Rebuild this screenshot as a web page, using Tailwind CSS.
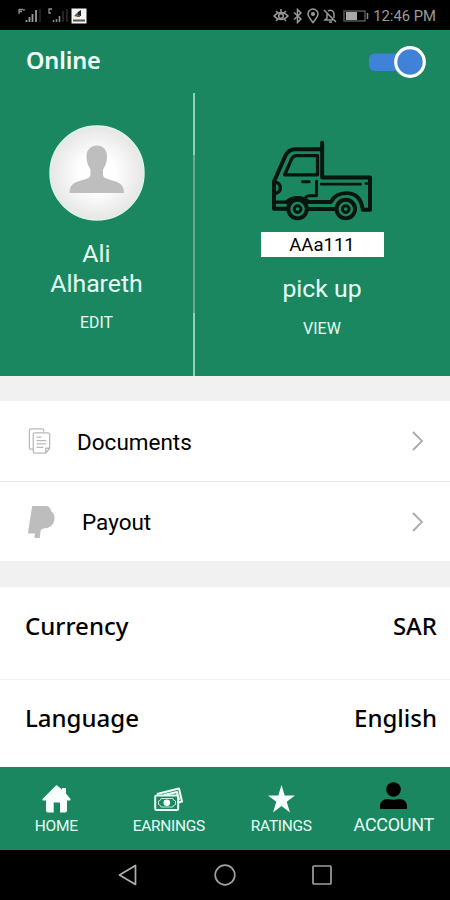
<!DOCTYPE html>
<html lang="en">
<head>
  <meta charset="UTF-8" />
  <meta name="viewport" content="width=device-width, initial-scale=1.0"/>
  <title>Driver | Account</title>
  <script src="https://cdn.jsdelivr.net/npm/@tailwindcss/browser@4"></script>
</head>
<body class="bg-white font-['Roboto',sans-serif] text-black">
  <div class="w-[450px] h-[900px] flex flex-col overflow-hidden">

    <!-- Status Bar -->
    <div class="h-[30px] shrink-0 bg-black flex items-center justify-between pl-[17px] pr-[14px] text-[#9a9a9a]">
      <svg class="w-[72px] h-[18px]" viewBox="0 0 72 18" fill="none">
        <path d="M2 3v5M2 3.500h4M2 5.500h3M7 3v2" stroke="#8f8f8f" stroke-width="1.300"/>
        <path d="M9.500 16v-2M12.500 16v-5M15.500 16V8M19 16V4" stroke="#9a9a9a" stroke-width="1.800"/>
        <path d="M23 16V3" stroke="#333" stroke-width="1.200"/>
        <path d="M35 3h-3v4h2" stroke="#8f8f8f" stroke-width="1.300"/>
        <path d="M36.500 16v-2M39.500 16v-3M42.500 16v-6" stroke="#8a8a8a" stroke-width="1.600"/>
        <path d="M46 16V5M50 16V3" stroke="#333" stroke-width="1.400"/>
        <path d="M54.500 2.500h15v15h-15z" fill="#f4f4f0"/>
        <path d="M57 10l4-4v5z" fill="#2d7a55"/>
        <path d="M61 6l3-2v6h-3z" fill="#222"/>
        <path d="M60 9h3v2h-3z" fill="#c33"/>
        <path d="M56 14.500h12" stroke="#555" stroke-width="2"/>
      </svg>
      <div class="flex items-center mt-[2px]">
        <svg class="w-[96px] h-[16px] mr-[4px]" viewBox="0 0 96 16" fill="none" stroke="#9a9a9a" stroke-width="1.500">
          <path d="M1 8q7-7 14 0q-7 7-14 0zM3 3l2 2M8 1v3M13 3l-2 2M3 13l2-2M13 13l-2-2"/>
          <circle cx="8" cy="8" r="2.300"/>
          <path d="M21 4.500l7 6.500-3.500 3.500V1.500L28 5l-7 6.500"/>
          <path d="M40 14.500c-3-4-5-6-5-8.500a5 5 0 0 1 10 0c0 2.500-2 4.500-5 8.500z"/>
          <circle cx="40" cy="6" r="1.300" fill="#9a9a9a"/>
          <path d="M51 2l12 12M54 5v5l-2 2h8M55 3c3-2 6 0 6 3v4M56 14h3"/>
          <path d="M71 3h21v10H71z" stroke="#555"/>
          <path d="M73 4h11v8H73z" fill="#a8a8a8" stroke="none"/>
          <path d="M94.500 5v6" stroke="#888"/>
        </svg>
        <span class="text-[14.800px] leading-none whitespace-nowrap">12:46 PM</span>
      </div>
    </div>

    <!-- Online Toggle -->
    <div class="h-[63px] shrink-0 bg-[#1b8761] flex items-center justify-between pl-[26px] pr-[24px]">
      <h1 class="-mt-[2px] text-[23.500px] leading-none font-semibold tracking-[-0.150px] text-[#f0fff8] font-['Noto_Sans',sans-serif]">Online</h1>
      <button class="w-[57px] h-[32px] flex items-center" aria-label="Online">
        <svg class="w-[57px] h-[32px]" viewBox="0 0 57 32">
          <rect x="0" y="7.500" width="40" height="17.500" rx="6" fill="#3f82d8"/>
          <circle cx="41" cy="16" r="14.300" fill="#3f82d8" stroke="#fff" stroke-width="3.200"/>
        </svg>
      </button>
    </div>

    <!-- Profile And Vehicle -->
    <div class="h-[283px] shrink-0 bg-[#1b8761] flex text-[#e6fff4]">
      <div class="w-[193px] flex flex-col items-center pt-[32px]">
        <svg class="w-[96px] h-[96px]" viewBox="0 0 96 96">
          <defs>
            <radialGradient id="avatarBg">
              <stop offset="0.400" stop-color="#fefefe"/>
              <stop offset="1" stop-color="#e6e6e6"/>
            </radialGradient>
          </defs>
          <circle cx="48" cy="48" r="47" fill="url(#avatarBg)" stroke="#dcf8ea" stroke-width="1.400"/>
          <path d="M48 20.500c6 0 10 4 10 11 0 6-2 10-4 13v5c0 4 5 4.500 11 6.500 7 2 10 5 10 12H20.500c0-7 3-10 10-12 6-2 11-2.500 11-6.500v-5c-2-3-4-7-4-13 0-7 4.500-11 10.500-11z" fill="#bebebe"/>
        </svg>
        <div class="mt-[18px] text-[24.800px] leading-[29.500px] text-center">Ali<br>Alhareth</div>
        <a href="#" class="mt-[16px] text-[15.800px] leading-[18px]">EDIT</a>
      </div>
      <div class="w-[3px] pr-px flex flex-col">
        <div class="h-[62px] bg-[#93cfb5]"></div>
        <div class="h-[158px] bg-[#6aa88f]"></div>
        <div class="grow bg-[#93cfb5]"></div>
      </div>
      <div class="grow flex flex-col items-center pt-[47px] pr-[2px]">
        <svg class="w-[103px] h-[81px]" viewBox="95 30 310 242" fill="none" stroke="#07150f" stroke-width="12" stroke-linejoin="round" stroke-linecap="round">
          <path d="M249 37v105H393v97h-22"/>
          <path d="M246 57h-78q-19 0-29 18l-35 79v82h42"/>
          <path d="M235 76h-63q-10 0-15 10l-21 48h99z" stroke-width="10"/>
          <path d="M103 155q20 2 20 18t-20 18M105 216h38" stroke-width="10"/>
          <path d="M190 155h20M232 153v44h-23q-5 0-10 5" stroke-width="9"/>
          <path d="M246 162h119M380 160h9" stroke-width="8"/>
          <path d="M143 216q10-12 32-12 22 0 33 12h67q14-27 46-27 42 0 49 44M209 237h76"/>
          <circle cx="175" cy="237" r="28"/>
          <circle cx="175" cy="237" r="10" stroke-width="9"/>
          <circle cx="320" cy="237" r="28"/>
          <circle cx="320" cy="237" r="10" stroke-width="9"/>
        </svg>
        <div class="mt-[11px] w-[123px] h-[25px] bg-white text-black text-[18.500px] leading-[26px] text-center">AAa111</div>
        <div class="mt-[17px] text-[24.800px] leading-[30px]">pick up</div>
        <a href="#" class="mt-[16px] text-[16px] leading-[18px]">VIEW</a>
      </div>
    </div>

    <div class="h-[25px] shrink-0 bg-[#f1f1f2]"></div>

    <!-- Menu Rows -->
    <a href="#" class="h-[81px] shrink-0 border-b border-[#e8e8e8] flex items-center pl-[28px] pr-[27px]">
      <svg class="w-[23px] h-[27px]" viewBox="0 0 23 28" fill="none" stroke="#b9b9b9" stroke-width="1.300" stroke-linejoin="round">
        <path d="M5 22H3q-2 0-2-2V3q0-2 2-2h11q2 0 2 2v1"/>
        <path d="M5 7q0-2 2-2h13q2 0 2 2v14l-4 5H7q-2 0-2-2zM22 21h-4v5"/>
        <path d="M8.500 9.500h5M8.500 13h10M8.500 16.500h10M8.500 20h7"/>
      </svg>
      <span class="ml-[26px] mt-[2px] grow text-[22.500px] leading-none">Documents</span>
      <svg class="w-[11px] h-[20px]" viewBox="0 0 11 20" fill="none" stroke="#ababab" stroke-width="1.900"><path d="M1 1l9 9-9 9"/></svg>
    </a>
    <a href="#" class="h-[79px] shrink-0 flex items-center pl-[28px] pr-[27px]">
      <svg class="w-[27px] h-[32px]" viewBox="0 0 27 32" fill="#bdbdbd"><path d="M4 1q0-1 1-1h13q4 0 5 5 4 3 3.500 8-1 9-11 9.500-2.500 0-3 2.500l-.500 6q0 1-1 1H7.500q-1 0-1-1l.500-3.500H1q-1 0-1-1z"/></svg>
      <span class="ml-[27px] mt-[2px] grow text-[22.500px] leading-none">Payout</span>
      <svg class="w-[11px] h-[20px]" viewBox="0 0 11 20" fill="none" stroke="#ababab" stroke-width="1.900"><path d="M1 1l9 9-9 9"/></svg>
    </a>

    <div class="h-[26px] shrink-0 bg-[#f1f1f2]"></div>

    <!-- Settings -->
    <div class="h-[93px] shrink-0 border-b border-[#f1f1f1] flex items-start justify-between pt-[27px] pl-[25px] pr-[13px] text-[24px] leading-[24px] font-medium font-['Noto_Sans',sans-serif]">
      <span>Currency</span>
      <span>SAR</span>
    </div>
    <div class="h-[87px] shrink-0 flex items-start justify-between pt-[26px] pl-[25px] pr-[13px] text-[24px] leading-[24px] font-medium font-['Noto_Sans',sans-serif]">
      <span>Language</span>
      <span>English</span>
    </div>

    <!-- Bottom Tabs -->
    <nav class="h-[83px] shrink-0 bg-[#1b8761] grid grid-cols-4 text-[15.500px] leading-[18px] tracking-[-0.300px] text-[#e6fff4]">
      <a href="#" class="flex flex-col items-center pt-[18px]">
        <svg class="w-[29px] h-[28px]" viewBox="0 0 29 28" fill="#f6fffb"><path d="M14.500 0L20 4.500V3h4v5.500l4.500 5.500q.500 1.500-1 1.500H25V25.500q0 2-2 2h-5v-10h-6.300v10H6q-2 0-2-2v-10H1.500q-1.500 0-1-1.500z"/></svg>
        <span class="mt-[4px]">HOME</span>
      </a>
      <a href="#" class="flex flex-col items-center pt-[20px]">
        <svg class="w-[29px] h-[24px]" viewBox="0 0 29 24" fill="none" stroke="#f0fff8" stroke-width="2" stroke-linejoin="round">
          <path d="M3 7L25 1.500l3 13-4 1"/>
          <path d="M10 8l13-3 2 8"/>
          <rect x="1.200" y="8.500" width="23" height="14.500" rx="1.500"/>
          <path d="M7 11.500h12q0 2 2.500 2.500v3.500q-2.500.500-2.500 2.500H7q0-2-2.500-2.500V14q2.500-.500 2.500-2.500z" stroke-width="0.800"/>
          <circle cx="12.800" cy="15.700" r="3.300" fill="#f0fff8" stroke="none"/>
        </svg>
        <span class="mt-[6px]">EARNINGS</span>
      </a>
      <a href="#" class="flex flex-col items-center pt-[18px]">
        <svg class="w-[27px] h-[28px]" viewBox="0 0 27 28" fill="#f6fffb"><path d="M13.500 0l3.200 10.500H27l-8.300 6.200L22 27.500l-8.500-6.500L5 27.500l3.300-10.800L0 10.500h10.300z"/></svg>
        <span class="mt-[4px]">RATINGS</span>
      </a>
      <a href="#" class="flex flex-col items-center pt-[15px]">
        <svg class="w-[27px] h-[27px]" viewBox="0 0 27 27" fill="#000"><circle cx="13.500" cy="7.500" r="7.300"/><path d="M0 27v-2q0-8 8-8 5 1.500 11 0 8 0 8 8v2z"/></svg>
        <span class="mt-[7px] text-[18px]">ACCOUNT</span>
      </a>
    </nav>

    <!-- System Navigation -->
    <div class="h-[50px] shrink-0 bg-black flex items-center justify-center gap-[76px]">
      <svg class="w-[20px] h-[22px]" viewBox="0 0 20 22" fill="none" stroke="#b0b0b0" stroke-width="1.700" stroke-linejoin="round"><path d="M1.500 11L17.500 1.500v19z"/></svg>
      <svg class="w-[22px] h-[22px]" viewBox="0 0 22 22" fill="none" stroke="#a0a0a0" stroke-width="1.700"><circle cx="11" cy="11" r="9.800"/></svg>
      <svg class="w-[20px] h-[20px]" viewBox="0 0 20 20" fill="none" stroke="#a0a0a0" stroke-width="1.700"><rect x="1" y="1" width="18" height="18" rx="1"/></svg>
    </div>
  </div>
</body>
</html>
